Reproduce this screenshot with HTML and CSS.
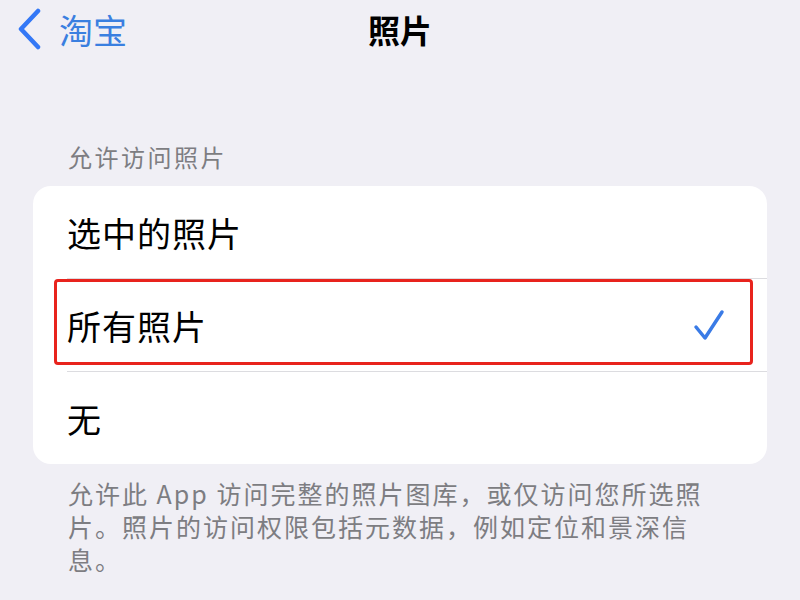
FILE: index.html
```html
<!DOCTYPE html>
<html lang="zh-CN">
<head>
    <meta charset="UTF-8">
    <meta name="viewport" content="width=device-width, initial-scale=1.0">
    <title>照片</title>
    <link rel="stylesheet" href="styles.css">
</head>
<body>
    <!-- Top navigation -->
    <div class="nav">
        <a class="back" href="#">
            <svg class="chevron" width="28" height="42" viewBox="0 0 28 42">
                <path d="M23 3 L6 21 L23 39" fill="none" stroke="#3478f6" stroke-width="4.5" stroke-linecap="round" stroke-linejoin="round"/>
            </svg>
            <span>淘宝</span>
        </a>
        <h1 class="title">照片</h1>
        <div></div>
    </div>

    <div class="section-title">允许访问照片</div>

    <!-- Options list -->
    <ul class="card">
        <li class="row">选中的照片</li>
        <li class="row selected">
            <span>所有照片</span>
            <svg class="check" width="32" height="34" viewBox="0 0 32 34">
                <path d="M3 19 L12 30 L29 4" fill="none" stroke="#3a7be6" stroke-width="3.5" stroke-linecap="round" stroke-linejoin="round"/>
            </svg>
            <div class="highlight"></div>
        </li>
        <li class="row">无</li>
    </ul>

    <p class="footer">允许此 App 访问完整的照片图库，或仅访问您所选照片。照片的访问权限包括元数据，例如定位和景深信息。</p>
</body>
</html>
```

FILE: styles.css
```css
body {
    margin: 0;
    padding: 0;
    background-color: #f0eff5;
    font-family: "Noto Sans CJK SC", "Noto Sans", sans-serif;
    color: #000;
}

.nav {
    display: grid;
    grid-template-columns: 1fr auto 1fr;
    align-items: center;
    height: 58px;
}

.back {
    display: flex;
    align-items: center;
    gap: 16px;
    padding-left: 15px;
    color: #3a7fe0;
    text-decoration: none;
    font-size: 34px;
}

.title {
    margin: 0;
    font-size: 32px;
    font-weight: bold;
}

.section-title {
    margin: 82px 0 0 68px;
    font-size: 24px;
    letter-spacing: 2.5px;
    color: #7d7d82;
    line-height: 34px;
}

.card {
    list-style-type: none;
    margin: 12px 33px 0 33px;
    padding: 0;
    background-color: #fff;
    border-radius: 18px;
}

.row {
    position: relative;
    display: flex;
    align-items: center;
    justify-content: space-between;
    height: 92px;
    margin-left: 34px;
    padding-right: 42px;
    font-size: 34px;
    letter-spacing: 1px;
    border-bottom: 1px solid #dcdce0;
}

.row:last-child {
    border-bottom: none;
}

.check {
    display: block;
}

.highlight {
    position: absolute;
    left: -13px;
    right: 14px;
    top: 0;
    bottom: 6px;
    border: 3px solid #e8231d;
    border-radius: 4px;
}

.footer {
    margin: 13px 0 0 68px;
    width: 645px;
    font-size: 25px;
    letter-spacing: 2px;
    line-height: 33px;
    color: #7d7d82;
}
```
